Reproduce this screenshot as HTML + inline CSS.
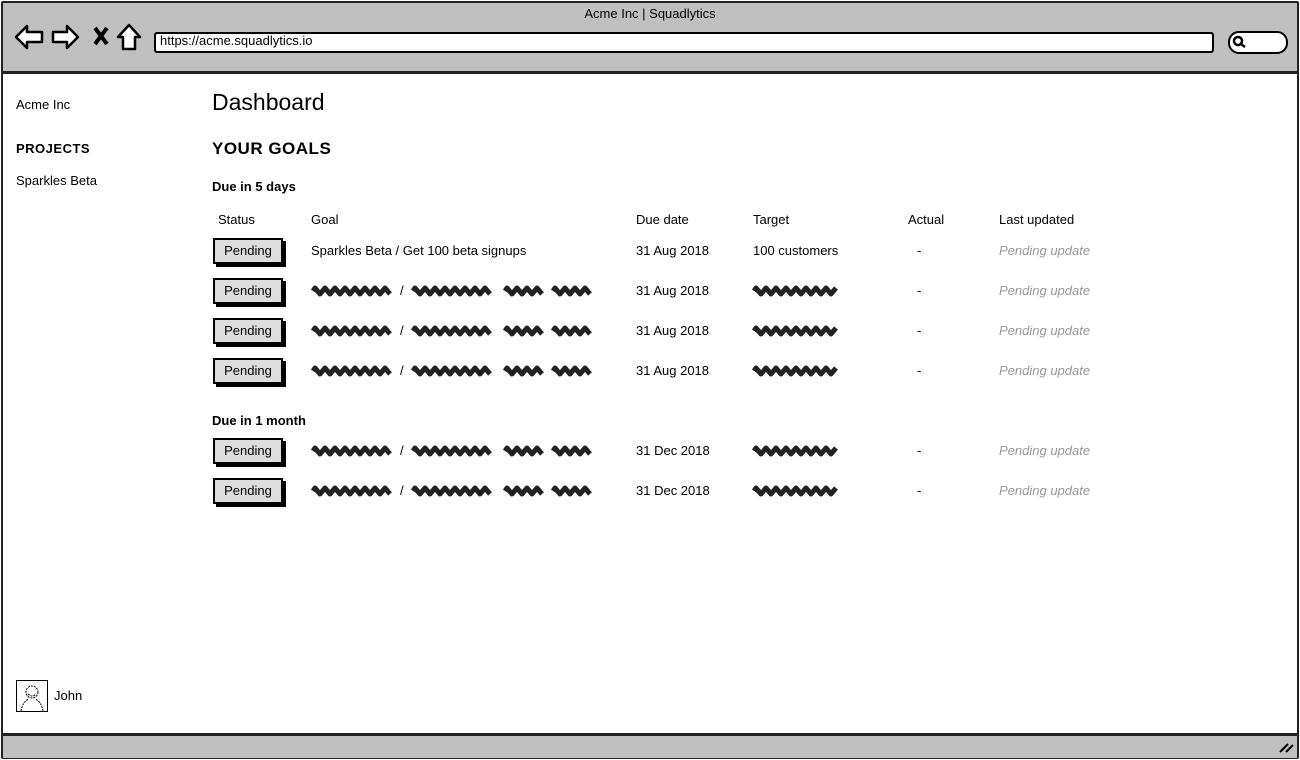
<!DOCTYPE html><html><head><style>
body{margin:0;width:1300px;height:760px;background:#fff;font-family:"Liberation Sans",sans-serif;color:#000;position:relative;overflow:hidden}
.a{position:absolute;white-space:nowrap}
.t{font-size:13px}
.btn{position:absolute;left:213px;width:66px;height:22px;background:#ddd;border:2px solid #000;box-shadow:3px 3px 0 #000;font-size:13px;text-align:center;line-height:22px;box-sizing:content-box}
.pu{color:#999;font-style:italic;font-size:13px}
</style></head><body>
<div class="a" style="left:1px;top:1px;width:1294px;height:754px;border:2px solid #222;border-radius:2px"></div>
<div class="a" style="left:3px;top:3px;width:1294px;height:68px;background:#c0c0c0;border-bottom:3px solid #222"></div>
<div class="a" style="left:3px;top:733px;width:1294px;height:22px;background:#c0c0c0;border-top:3px solid #222"></div>
<div class="a t" style="left:0;width:1300px;text-align:center;top:6px">Acme Inc | Squadlytics</div>
<svg class="a" style="left:14px;top:22px" width="135" height="30" viewBox="0 0 135 30" fill="#fff" stroke="#000" stroke-width="2.5" stroke-linejoin="round">
<path d="M2 15 L13 4 L13 10 L28 10 L28 20 L13 20 L13 26 Z"/>
<path d="M64 15 L53 4 L53 10 L39 10 L39 20 L53 20 L53 26 Z"/>
<path d="M81 6 L93 22 M93 6 L81 22" stroke-width="4" fill="none"/>
<path d="M115 3 L104 15 L109 15 L109 27 L121 27 L121 15 L126 15 Z"/>
</svg>
<div class="a" style="left:154px;top:32px;width:1056px;height:17px;background:#fff;border:2px solid #000;border-radius:3px"></div>
<div class="a t" style="left:160px;top:33px">https://acme.squadlytics.io</div>
<div class="a" style="left:1228px;top:31px;width:56px;height:19px;background:#fff;border:2px solid #000;border-radius:11px"></div>
<svg class="a" style="left:1232px;top:35px" width="14" height="14"><circle cx="6" cy="6" r="4" fill="none" stroke="#000" stroke-width="2.5"/><path d="M9 9 L13 12" stroke="#000" stroke-width="2.5"/></svg>
<svg class="a" style="left:1278px;top:740px" width="16" height="14" stroke="#000" stroke-width="2"><path d="M2 12 L10 4 M8 12 L15 5"/></svg>

<div class="a t" style="left:16px;top:97px">Acme Inc</div>
<div class="a t" style="left:16px;top:141px;font-weight:bold;letter-spacing:.5px">PROJECTS</div>
<div class="a t" style="left:16px;top:173px">Sparkles Beta</div>
<div class="a" style="left:16px;top:680px;width:30px;height:30px;border:1px solid #000"></div>
<svg class="a" style="left:16px;top:680px" width="32" height="32" fill="none" stroke="#000" stroke-dasharray="2 1"><circle cx="16" cy="12" r="6"/><path d="M12 14 Q16 18 20 14 M5 31 Q7 21 13 19 M27 31 Q25 21 19 19"/></svg>
<div class="a t" style="left:54px;top:688px">John</div>

<div class="a" style="left:212px;top:89px;font-size:23px">Dashboard</div>
<div class="a" style="left:212px;top:139px;font-size:17px;font-weight:bold;letter-spacing:.5px">YOUR GOALS</div>
<div class="a t" style="left:212px;top:179px;font-weight:bold">Due in 5 days</div>
<div class="a t" style="left:218px;top:212px">Status</div>
<div class="a t" style="left:311px;top:212px">Goal</div>
<div class="a t" style="left:636px;top:212px">Due date</div>
<div class="a t" style="left:753px;top:212px">Target</div>
<div class="a t" style="left:908px;top:212px">Actual</div>
<div class="a t" style="left:999px;top:212px">Last updated</div>
<div class="a t" style="left:212px;top:413px;font-weight:bold">Due in 1 month</div>

<svg width="0" height="0" style="position:absolute"><defs>
<path id="s" d="M0 0 q3 -3 6 0 t6 0 t6 0 t6 0 t6 0 t6 0 t6 0 t6 0 t6 0 t6 0 t6 0 t6 0 t6 0 t6 0 t6 0 t6 0 t6 0 t6 0"/>
</defs></svg>

<!-- rows -->
<div class="btn" style="top:238px">Pending</div>
<div class="a t" style="left:311px;top:243px">Sparkles Beta / Get 100 beta signups</div>
<div class="a t" style="left:636px;top:243px">31 Aug 2018</div>
<div class="a t" style="left:753px;top:243px">100 customers</div>
<div class="a t" style="left:917px;top:243px">-</div>
<div class="a pu" style="left:999px;top:243px">Pending update</div>

<div id="rows"></div>
<script>
var ys=[278,318,358,438,478],ds=["31 Aug 2018","31 Aug 2018","31 Aug 2018","31 Dec 2018","31 Dec 2018"],h="";
function sc(x,w,y){return '<svg class="a" style="left:'+x+'px;top:'+(y-6)+'px" width="'+w+'" height="12"><path d="M2 6 '+(function(){var s="";for(var i=4;i<w-2;i+=5)s+="L"+i+" "+(i%10<5?3:9)+" ";return s})()+'" fill="none" stroke="#222" stroke-width="5" stroke-linejoin="round"/></svg>';}
ys.forEach(function(y,i){
h+='<div class="btn" style="top:'+y+'px">Pending</div>';
var c=y+13;
h+=sc(311,86,c)+'<div class="a t" style="left:400px;top:'+(y+5)+'px">/</div>'+sc(411,86,c)+sc(503,43,c)+sc(551,46,c)+sc(752,87,c);
h+='<div class="a t" style="left:636px;top:'+(y+5)+'px">'+ds[i]+'</div>';
h+='<div class="a t" style="left:917px;top:'+(y+5)+'px">-</div>';
h+='<div class="a pu" style="left:999px;top:'+(y+5)+'px">Pending update</div>';
});
document.getElementById("rows").innerHTML=h;
</script>
</body></html>
